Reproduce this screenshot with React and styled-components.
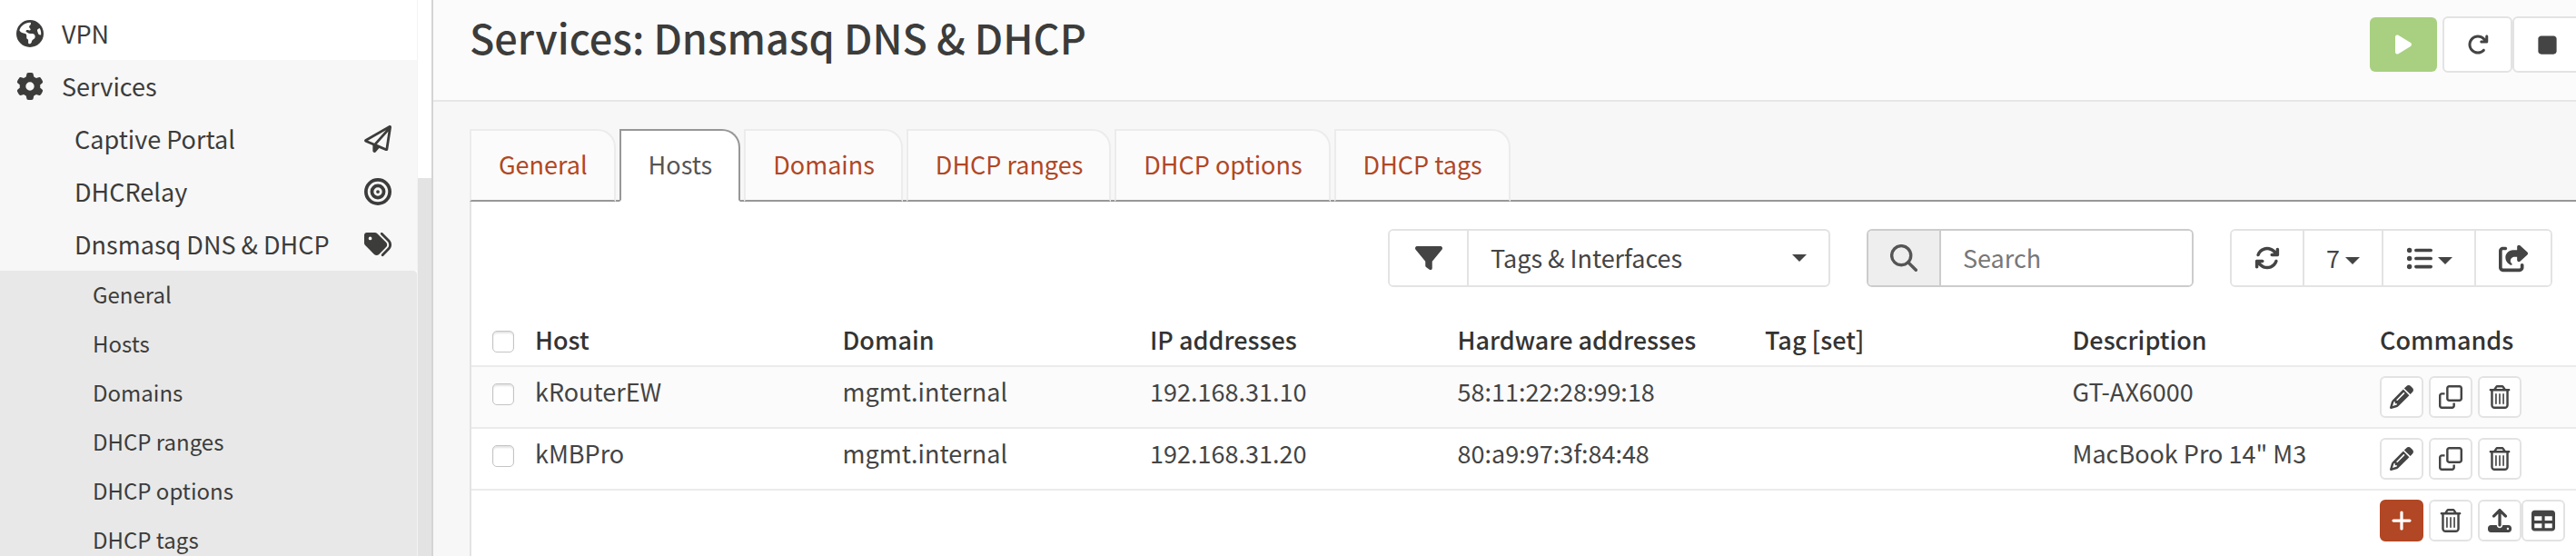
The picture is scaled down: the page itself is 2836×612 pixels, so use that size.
import React from 'react';
import styled, { createGlobalStyle, css } from 'styled-components';
import {
  FaEarthAmericas, FaGear, FaRegPaperPlane, FaBullseye, FaTags, FaFilter,
  FaArrowsRotate, FaListUl, FaShareFromSquare, FaPencil, FaRegClone, FaRegTrashCan, FaPlus,
  FaUpload, FaTable, FaPlay, FaArrowRotateRight, FaStop,
} from 'react-icons/fa6';

const font = '"Noto Sans CJK SC", "Noto Sans", sans-serif';

const GlobalStyle = createGlobalStyle`
  *, *::before, *::after { box-sizing: border-box; }
  body {
    margin: 0;
    background: #f7f7f7;
    color: #3c3c3b;
    font: 400 27px/40px ${font};
    overflow: hidden;
  }
  button, input, select { font: inherit; color: inherit; }
  a { text-decoration: none; }
  svg { display: block; flex: none; }
`;

const Page = styled.div`
  display: flex;
  height: 100vh;
  overflow: hidden;
`;

const Sidebar = styled.aside`
  flex: none;
  display: flex;
  width: 477px;
  background: #fff;
  border-right: 2px solid #d4d4d4;
`;

const Menu = styled.nav`
  flex: 1;
  padding-top: 8px;
  border-right: 1px solid #f3f3f3;
`;

const Scrollbar = styled.div`
  width: 15px;
  margin-top: 196px;
  background: #e3e3e3;
`;

const MenuLink = styled.a`
  display: flex;
  align-items: center;
  gap: 20px;
  height: 58px;
  padding: 0 28px 0 ${(p) => (p.$nested ? 82 : 18)}px;
  background: ${(p) => (p.$shaded ? '#f7f7f7' : 'transparent')};
  color: #3c3c3b;
  ${(p) => p.$nested && css`justify-content: space-between;`}
`;

const SubMenu = styled.div`
  background: #e8e8e8;
  border-top-right-radius: 4px;
`;

const SubLink = styled.a`
  display: block;
  padding: 0 0 2px 102px;
  font-size: 24px;
  line-height: 52px;
  color: #3c3c3b;
`;

const Main = styled.main`
  flex: 1;
  min-width: 0;
  display: flex;
  flex-direction: column;
`;

const Header = styled.header`
  display: flex;
  justify-content: space-between;
  height: 112px;
  padding: 18px 0 0 40px;
  background: #fbfbfb;
  border-bottom: 2px solid #e7e7e7;
`;

const Title = styled.h1`
  margin: 0;
  font-size: 45px;
  line-height: 46px;
  font-weight: 500;
`;

const ServiceControls = styled.div`
  display: flex;
  height: 62px;
  margin-right: -7px;
`;

const Button = styled.button`
  display: flex;
  align-items: center;
  justify-content: center;
  gap: 6px;
  padding: 0;
  background: #fff;
  border: 2px solid #e3e3e3;
  border-radius: 6px;
  color: #444;
`;

const ServiceButton = styled(Button)`
  width: 77px;
  ${(p) => p.$running && css`
    width: 74px;
    margin: 1px 6px 1px 0;
    background: #a8d080;
    border: 0;
    color: #fff;
  `}
`;

const Body = styled.div`
  flex: 1;
  display: flex;
  flex-direction: column;
  padding: 30px 0 0 40px;
`;

const Tabs = styled.nav`
  display: flex;
  gap: 4px;
  height: 80px;
  border-bottom: 2px solid #979797;
`;

const Tab = styled.a`
  height: 80px;
  padding: 17px 29px 0 30px;
  border: 2px solid #ececec;
  border-bottom-color: #979797;
  border-top-right-radius: 20px;
  background: #fbfbfb;
  color: #b14724;
  ${(p) => p.$active && css`
    background: #fff;
    border-color: #979797;
    border-bottom-color: #fff;
    color: #555;
  `}
`;

const Panel = styled.section`
  flex: 1;
  background: #fff;
  border-left: 2px solid #e3e3e3;
`;

const Toolbar = styled.div`
  display: flex;
  justify-content: flex-end;
  gap: 40px;
  padding: 30px 26px 14px 0;
`;

const Group = styled.div`
  display: flex;
  height: 64px;
  border: 2px solid ${(p) => (p.$strong ? '#ccc' : '#e3e3e3')};
  border-radius: 6px;
  background: #fff;
  overflow: hidden;
  && > * + * { border-left: 2px solid ${(p) => (p.$strong ? '#ccc' : '#e3e3e3')}; }
`;

const Addon = styled.label`
  display: flex;
  align-items: center;
  justify-content: center;
  width: ${(p) => p.$width}px;
  background: ${(p) => (p.$shaded ? '#eee' : '#fff')};
  color: ${(p) => (p.$shaded ? '#555' : '#444')};
`;

const SelectBox = styled.div`
  display: flex;
  align-items: center;
  width: 398px;
  padding-right: 24px;
  color: #444;
`;

const Select = styled.select`
  flex: 1;
  appearance: none;
  height: 60px;
  padding: 0 0 0 24px;
  border: 0;
  outline: 0;
  background: transparent;
`;

const Caret = styled.span`
  border: 8px solid transparent;
  border-top-color: #444;
  border-bottom: 0;
  margin-top: ${(p) => (p.$low ? 6 : 0)}px;
`;

const SearchInput = styled.input`
  width: 278px;
  padding: 0 24px;
  border: 0;
  outline: 0;
  &::placeholder { color: #777; opacity: 1; }
`;

const ToolButton = styled(Button)`
  width: ${(p) => p.$width}px;
  border: 0;
  border-radius: 0;
`;

const Table = styled.table`
  width: 100%;
  table-layout: fixed;
  border-collapse: collapse;
  text-align: left;
`;

const Row = styled.tr`
  border-bottom: ${(p) => (p.$last ? 0 : '2px solid #ebebeb')};
  background: ${(p) => (p.$striped ? '#fbfbfb' : '#fff')};
`;

const Th = styled.th`
  width: ${(p) => (p.$width ? `${p.$width}px` : 'auto')};
  padding: 26px 10px 10px;
  line-height: 36px;
  font-weight: 500;
  color: #333;
  vertical-align: top;
`;

const Td = styled.td`
  padding: 10px;
  height: 66px;
  line-height: 34px;
  vertical-align: top;
  color: #444;
`;

const Checkbox = styled.input`
  appearance: none;
  display: block;
  width: 24px;
  height: 24px;
  margin: 8px 0 0 13px;
  border: 1px solid #c4c4c4;
  border-radius: 5px;
  background: #fff;
  box-shadow: inset 0 2px 2px #e4e4e4;
`;

const Commands = styled.div`
  display: flex;
  gap: 6px;
`;

const Pair = styled.div`
  display: flex;
`;

const IconButton = styled(Button)`
  width: 48px;
  height: 46px;
  ${(p) => p.$primary && css`
    background: #b14724;
    border-color: #b14724;
    color: #fff;
  `}
`;

const SearchIcon = () => (
  <svg width="30" height="30" viewBox="0 0 512 512" fill="none" stroke="currentColor" strokeWidth="58" strokeLinecap="round">
    <circle cx="208" cy="208" r="180" />
    <path d="M337 337 483 483" />
  </svg>
);

const services = [
  ['Captive Portal', FaRegPaperPlane],
  ['DHCRelay', FaBullseye],
  ['Dnsmasq DNS & DHCP', FaTags],
];
const tabs = ['General', 'Hosts', 'Domains', 'DHCP ranges', 'DHCP options', 'DHCP tags'];
const columns = ['Host', 'Domain', 'IP addresses', 'Hardware addresses', 'Tag [set]', 'Description'];
const hosts = [
  ['kRouterEW', 'mgmt.internal', '192.168.31.10', '58:11:22:28:99:18', '', 'GT-AX6000'],
  ['kMBPro', 'mgmt.internal', '192.168.31.20', '80:a9:97:3f:84:48', '', 'MacBook Pro 14" M3'],
];

export default function App() {
  return (
    <Page>
      <GlobalStyle />
      <Sidebar>
        <Menu>
          <MenuLink href="#vpn"><FaEarthAmericas size={30} />VPN</MenuLink>
          <MenuLink href="#services" $shaded><FaGear size={30} />Services</MenuLink>
          {services.map(([name, Icon]) => (
            <MenuLink key={name} href="#service" $shaded $nested>{name}<Icon size={30} /></MenuLink>
          ))}
          <SubMenu>
            {tabs.map((t) => <SubLink key={t} href="#sub">{t}</SubLink>)}
          </SubMenu>
        </Menu>
        <Scrollbar />
      </Sidebar>
      <Main>
        <Header>
          <Title>Services: Dnsmasq DNS &amp; DHCP</Title>
          <ServiceControls>
            <ServiceButton $running aria-label="Running"><FaPlay size={24} /></ServiceButton>
            <ServiceButton aria-label="Restart"><FaArrowRotateRight size={24} /></ServiceButton>
            <ServiceButton aria-label="Stop"><FaStop size={27} /></ServiceButton>
          </ServiceControls>
        </Header>
        <Body>
          <Tabs>
            {tabs.map((t) => <Tab key={t} href="#tab" $active={t === 'Hosts'}>{t}</Tab>)}
          </Tabs>
          <Panel>
            <Toolbar>
              <Group>
                <Addon htmlFor="filter" $width={85} aria-label="Filter"><FaFilter size={30} /></Addon>
                <SelectBox>
                  <Select id="filter"><option>Tags &amp; Interfaces</option></Select>
                  <Caret />
                </SelectBox>
              </Group>
              <Group $strong>
                <Addon htmlFor="search" $width={78} $shaded aria-label="Search"><SearchIcon /></Addon>
                <SearchInput id="search" type="text" placeholder="Search" />
              </Group>
              <Group>
                <ToolButton $width={78} aria-label="Refresh"><FaArrowsRotate size={28} /></ToolButton>
                <ToolButton $width={87}>7<Caret $low /></ToolButton>
                <ToolButton $width={102} aria-label="Columns"><FaListUl size={29} /><Caret $low /></ToolButton>
                <ToolButton $width={84} aria-label="Export"><FaShareFromSquare size={33} /></ToolButton>
              </Group>
            </Toolbar>
            <Table>
              <thead>
                <Row>
                  <Th $width={60}><Checkbox type="checkbox" aria-label="Select all" /></Th>
                  {columns.map((c) => <Th key={c}>{c}</Th>)}
                  <Th $width={226}>Commands</Th>
                </Row>
              </thead>
              <tbody>
                {hosts.map((row, i) => (
                  <Row key={row[0]} $striped={i === 0}>
                    <Td><Checkbox type="checkbox" aria-label={row[0]} /></Td>
                    {row.map((v, j) => <Td key={columns[j]}>{v}</Td>)}
                    <Td>
                      <Commands>
                        <IconButton aria-label="Edit"><FaPencil size={26} /></IconButton>
                        <IconButton aria-label="Clone"><FaRegClone size={26} /></IconButton>
                        <IconButton aria-label="Delete"><FaRegTrashCan size={26} /></IconButton>
                      </Commands>
                    </Td>
                  </Row>
                ))}
              </tbody>
              <tfoot>
                <Row $last>
                  <Td colSpan={7} />
                  <Td>
                    <Commands>
                      <IconButton $primary aria-label="Add"><FaPlus size={26} /></IconButton>
                      <IconButton aria-label="Delete selected"><FaRegTrashCan size={26} /></IconButton>
                      <Pair>
                        <IconButton aria-label="Import"><FaUpload size={26} /></IconButton>
                        <IconButton aria-label="Export table"><FaTable size={26} /></IconButton>
                      </Pair>
                    </Commands>
                  </Td>
                </Row>
              </tfoot>
            </Table>
          </Panel>
        </Body>
      </Main>
    </Page>
  );
}
